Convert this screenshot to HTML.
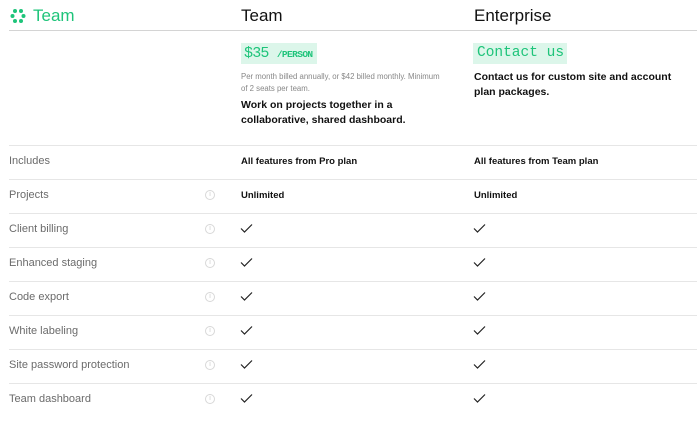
<!DOCTYPE html>
<html><head><meta charset="utf-8"><style>
*{margin:0;padding:0;box-sizing:border-box}
body{width:697px;height:428px;background:#fff;font-family:"Liberation Sans",sans-serif;position:relative;overflow:hidden;color:#111}
.a{position:absolute;white-space:nowrap}
.line{position:absolute;left:9px;right:0;height:1px;background:#e6e6e6}
.lbl{position:absolute;left:9px;font-size:11px;color:#6b6b6b}
.info{position:absolute;left:205px;width:10px;height:10px;border:1px solid #d8d8d8;border-radius:50%;font-size:7px;color:#ccc;text-align:center;line-height:8px}
.b{font-weight:bold;font-size:9.5px;position:absolute}
</style></head><body>
<svg class="a" style="left:10px;top:8px" width="16" height="16" viewBox="0 0 16 16" fill="#1ec47a">
<circle cx="5" cy="3" r="2"/><circle cx="11" cy="3" r="2"/><circle cx="2.5" cy="8" r="2"/><circle cx="13.5" cy="8" r="2"/><circle cx="5" cy="13" r="2"/><circle cx="11" cy="13" r="2"/></svg>
<div class="a" style="left:33px;top:6px;font-size:17px;color:#1ec47a">Team</div>
<div class="a" style="left:241px;top:6px;font-size:17px;color:#111">Team</div>
<div class="a" style="left:474px;top:6px;font-size:17px;color:#111">Enterprise</div>
<div class="line" style="top:30px;background:#d4d4d4"></div>

<div class="a" style="left:241px;top:43px;width:76px;height:21px;background:#dcf6ea"></div>
<div class="a" style="left:244px;top:45px;font-family:'Liberation Mono',monospace;color:#1ec47a;font-size:15px;letter-spacing:-0.8px">$35 <span style="font-size:9.5px;font-weight:bold;letter-spacing:-0.6px">/PERSON</span></div>
<div class="a" style="left:473px;top:43px;width:94px;height:21px;background:#dcf6ea"></div>
<div class="a" style="left:477px;top:45px;font-family:'Liberation Mono',monospace;color:#1ec47a;font-size:14.5px">Contact us</div>

<div class="a" style="left:241px;top:71px;font-size:7.8px;color:#888;line-height:12px">Per month billed annually, or $42 billed monthly. Minimum<br>of 2 seats per team.</div>
<div class="a" style="left:241px;top:98px;font-size:10.5px;font-weight:bold;line-height:14.5px">Work on projects together in a<br>collaborative, shared dashboard.</div>
<div class="a" style="left:474px;top:70px;font-size:10.5px;font-weight:bold;line-height:14.5px">Contact us for custom site and account<br>plan packages.</div>

<div class="line" style="top:145px"></div>
<div class="line" style="top:179px"></div>
<div class="line" style="top:213px"></div>
<div class="line" style="top:247px"></div>
<div class="line" style="top:281px"></div>
<div class="line" style="top:315px"></div>
<div class="line" style="top:349px"></div>
<div class="line" style="top:383px"></div>

<div class="lbl" style="top:155px">Includes</div>
<div class="b" style="left:241px;top:156px">All features from Pro plan</div>
<div class="b" style="left:474px;top:156px">All features from Team plan</div>
<div class="lbl" style="top:189px">Projects</div>
<div class="b" style="left:241px;top:190px">Unlimited</div>
<div class="b" style="left:474px;top:190px">Unlimited</div>
<div class="lbl" style="top:223px">Client billing</div>
<div class="lbl" style="top:257px">Enhanced staging</div>
<div class="lbl" style="top:291px">Code export</div>
<div class="lbl" style="top:325px">White labeling</div>
<div class="lbl" style="top:359px">Site password protection</div>
<div class="lbl" style="top:393px">Team dashboard</div>

<div class="info" style="top:190px">i</div>
<div class="info" style="top:224px">i</div>
<div class="info" style="top:258px">i</div>
<div class="info" style="top:292px">i</div>
<div class="info" style="top:326px">i</div>
<div class="info" style="top:360px">i</div>
<div class="info" style="top:394px">i</div>

<svg class="a" style="left:0;top:0" width="697" height="428">
<defs><path id="c" d="M0 4.5 L3.5 8 L11 0.5" fill="none" stroke="#222" stroke-width="1.2"/></defs>
<use href="#c" x="241" y="224"/><use href="#c" x="474" y="224"/>
<use href="#c" x="241" y="258"/><use href="#c" x="474" y="258"/>
<use href="#c" x="241" y="292"/><use href="#c" x="474" y="292"/>
<use href="#c" x="241" y="326"/><use href="#c" x="474" y="326"/>
<use href="#c" x="241" y="360"/><use href="#c" x="474" y="360"/>
<use href="#c" x="241" y="394"/><use href="#c" x="474" y="394"/>
</svg>
</body></html>
